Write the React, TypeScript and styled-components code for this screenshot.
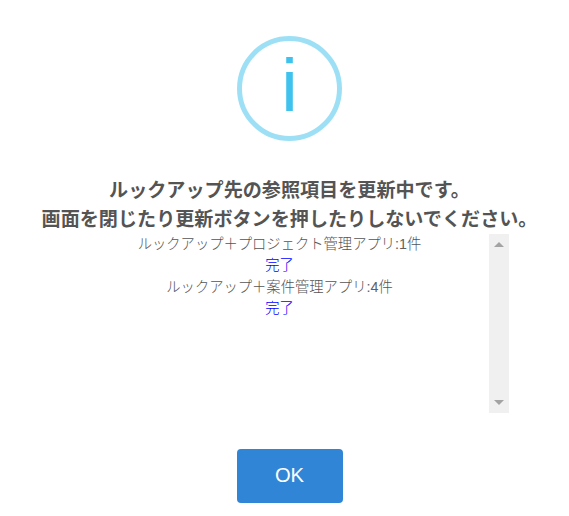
import React from 'react';
import styled, { createGlobalStyle } from 'styled-components';

const GlobalStyle = createGlobalStyle`
  *{box-sizing:border-box}
  body{margin:0;background:#fff;font-family:"Liberation Sans","Noto Sans CJK JP",sans-serif}
`;

const Popup = styled.div`display:flex;flex-direction:column;align-items:center;width:569px;height:516px;padding:36px 0 0 11px;overflow:hidden;color:#545454`;
const InfoIcon = styled.div`display:flex;justify-content:center;width:105px;height:105px;margin-right:1px;border:5px solid #9de0f6;border-radius:50%;color:#3fc3ee;font-size:74.5px;line-height:90px`;
const Title = styled.h2`margin:36px 0 0;font-size:19.1px;font-weight:700;line-height:28.5px;text-align:center;white-space:nowrap;padding-right:1px`;
const Log = styled.div`display:flex;width:439px;height:179px;margin:0 2px 0 0`;
const Entries = styled.div`flex:1;padding-left:1px;font-size:14.3px;font-weight:300;line-height:21.4px;text-align:center;white-space:nowrap`;
const Count = styled.span`color:#606060`;
const Status = styled.div`color:#00f`;
const ScrollTrack = styled.div`display:flex;flex-direction:column;justify-content:space-between;align-items:center;width:20px;padding:8px 0;background:#f0f0f0`;
const Arrow = styled.span<{ down?: boolean }>`width:0;height:0;border:5px solid transparent;border-top:${({down})=>down?'5px solid #a3a3a3':'0'};border-bottom:${({down})=>down?'0':'5px solid #a3a3a3'}`;
const OkButton = styled.button`width:106px;height:54px;margin-top:36px;padding:0 1px 1px 0;border:0;border-radius:4px;background:#3085d6;color:#fff;font-family:inherit;font-size:20.2px`;

const results = [
  { app: 'ルックアップ＋プロジェクト管理アプリ', count: 1 },
  { app: 'ルックアップ＋案件管理アプリ', count: 4 },
];

export default function App() {
  return (
    <Popup>
      <GlobalStyle />
      <InfoIcon>i</InfoIcon>
      <Title>ルックアップ先の参照項目を更新中です。<br />画面を閉じたり更新ボタンを押したりしないでください。</Title>
      <Log>
        <Entries>
          {results.map(r => (
            <React.Fragment key={r.app}>
              <div>{r.app}<Count>:{r.count}</Count>件</div>
              <Status>完了</Status>
            </React.Fragment>
          ))}
        </Entries>
        <ScrollTrack><Arrow /><Arrow down /></ScrollTrack>
      </Log>
      <OkButton>OK</OkButton>
    </Popup>
  );
}
